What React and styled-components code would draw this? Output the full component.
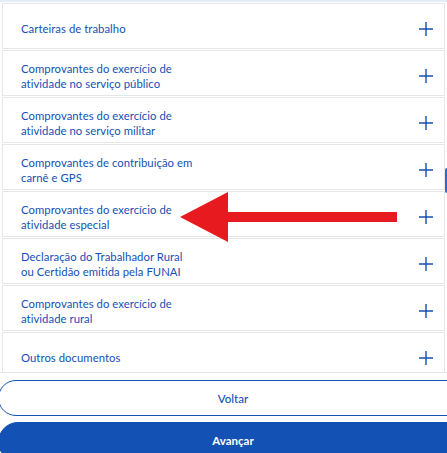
import React from "react";
import styled, { createGlobalStyle } from "styled-components";

const GlobalStyle = createGlobalStyle`
  html, body {
    margin: 0;
    padding: 0;
    background: #ffffff;
    overflow: hidden;
  }
  body {
    font-family: Lato, "Open Sans", sans-serif;
  }
`;

const Page = styled.div`
  position: relative;
  width: 447px;
  height: 453px;
  overflow: hidden;
  background: #ffffff;
`;

const List = styled.div`
  height: 369px;
  overflow: hidden;
  border-top: 2px solid #e2ebf6;
  border-bottom: 1px solid #e4e4e4;
  padding: 1px 2px 0;
  display: flex;
  flex-direction: column;
  gap: 1px;
`;

const Card = styled.div`
  flex: 0 0 46px;
  box-sizing: border-box;
  border: 1px solid #e6e6e6;
  display: flex;
  align-items: center;
  justify-content: space-between;
  padding: 5px 11px 0 18px;
`;

const Label = styled.span`
  color: #1351b4;
  font-size: 11.3px;
  line-height: 15px;
  letter-spacing: 0.05px;
  max-width: 175px;
`;

const Plus = () => (
  <svg width="14" height="14" viewBox="0 0 14 14" aria-hidden="true">
    <path d="M7 0v14M0 7h14" stroke="#1351b4" strokeWidth="1.4" fill="none" />
  </svg>
);

const ScrollThumb = styled.div`
  position: absolute;
  right: 0;
  top: 168px;
  width: 2px;
  height: 25px;
  background: #1e6fd9;
  border-radius: 2px 0 0 2px;
`;

const Actions = styled.div`
  display: flex;
  flex-direction: column;
  gap: 6px;
  margin: 7px 0 0 -2px;
  width: 470px;
`;

const Button = styled.button`
  height: ${({ $primary }) => ($primary ? "40px" : "36px")};
  box-sizing: border-box;
  border-radius: 20px;
  border: 1px solid #1351b4;
  background: ${({ $primary }) => ($primary ? "#1351b4" : "#ffffff")};
  color: ${({ $primary }) => ($primary ? "#ffffff" : "#1351b4")};
  font-family: Lato, "Open Sans", sans-serif;
  font-size: 11.5px;
  font-weight: ${({ $primary }) => ($primary ? 700 : 500)};
  align-self: stretch;
  display: flex;
  align-items: ${({ $primary }) => ($primary ? "flex-start" : "center")};
  padding: ${({ $primary }) => ($primary ? "11px 0 0" : "0")};
  justify-content: center;
`;

const Arrow = styled.svg`
  position: absolute;
  left: 178px;
  top: 190px;
`;

const items = [
  "Carteiras de trabalho",
  "Comprovantes do exercício de atividade no serviço público",
  "Comprovantes do exercício de atividade no serviço militar",
  "Comprovantes de contribuição em carnê e GPS",
  "Comprovantes do exercício de atividade especial",
  "Declaração do Trabalhador Rural ou Certidão emitida pela FUNAI",
  "Comprovantes do exercício de atividade rural",
  "Outros documentos",
];

export default function App() {
  return (
    <Page>
      <GlobalStyle />
      <List>
        {items.map((text) => (
          <Card key={text}>
            <Label>{text}</Label>
            <Plus />
          </Card>
        ))}
      </List>
      <ScrollThumb />
      <Actions>
        <Button>Voltar</Button>
        <Button $primary>Avançar</Button>
      </Actions>
      <Arrow width="222" height="54" viewBox="0 0 222 54">
        <polygon points="2,27 50,2 50,22 219,22 219,32 50,32 50,52" fill="#e71b1f" />
      </Arrow>
    </Page>
  );
}
